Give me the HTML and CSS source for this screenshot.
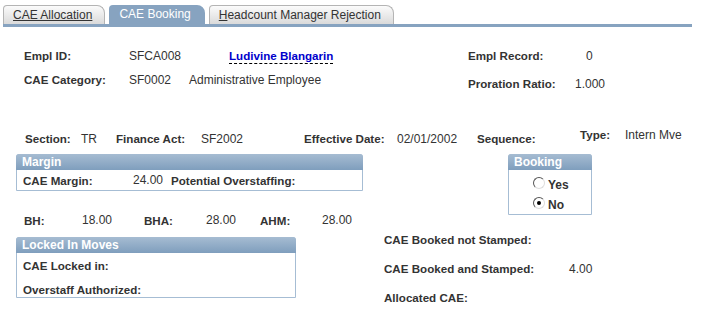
FILE: index.html
```html
<!DOCTYPE html>
<html lang="en">
<head>
  <meta charset="UTF-8">
  <title>CAE Booking</title>
  <link rel="stylesheet" href="styles.css">
</head>
<body>

<div class="tabs">
  <div class="tab"><span class="full-u">CAE Allocation</span></div>
  <div class="tab active">CAE Booking</div>
  <div class="tab"><u>H</u>eadcount Manager Rejection</div>
</div>

<div class="top">
  <div class="top-left">
    <div class="row">
      <span class="lbl w105">Empl ID:</span>
      <span class="val w100">SFCA008</span>
      <span class="name">Ludivine Blangarin</span>
    </div>
    <div class="row">
      <span class="lbl w105">CAE Category:</span>
      <span class="val w60">SF0002</span>
      <span class="val">Administrative Employee</span>
    </div>
  </div>
  <div class="top-right">
    <div class="row">
      <span class="lbl w118">Empl Record:</span>
      <span class="val">0</span>
    </div>
    <div class="row">
      <span class="lbl w107">Proration Ratio:</span>
      <span class="val">1.000</span>
    </div>
  </div>
</div>

<div class="info-row">
  <span class="lbl w56">Section:</span>
  <span class="val w35">TR</span>
  <span class="lbl w85">Finance Act:</span>
  <span class="val w103">SF2002</span>
  <span class="lbl w93">Effective Date:</span>
  <span class="val w80">02/01/2002</span>
  <span class="lbl w103">Sequence:</span>
  <span class="raised">
    <span class="lbl w45">Type:</span>
    <span class="val">Intern Mve</span>
  </span>
</div>

<div class="part-a">
  <div class="col-a">
    <div class="group margin-box">
      <div class="group-head">Margin</div>
      <div class="group-body margin-body">
        <span class="lbl w94">CAE Margin:</span>
        <span class="val num">24.00</span>
        <span class="lbl">Potential Overstaffing:</span>
      </div>
    </div>
    <div class="bh-row">
      <span class="lbl w58">BH:</span>
      <span class="val w62">18.00</span>
      <span class="lbl w62">BHA:</span>
      <span class="val w54">28.00</span>
      <span class="lbl w62">AHM:</span>
      <span class="val">28.00</span>
    </div>
  </div>
  <div class="group booking-box">
    <div class="group-head">Booking</div>
    <div class="group-body booking-body">
      <div class="radio-line"><span class="radio"></span><span class="opt">Yes</span></div>
      <div class="radio-line"><span class="radio checked"></span><span class="opt">No</span></div>
    </div>
  </div>
</div>

<div class="part-b">
  <div class="group locked-box">
    <div class="group-head">Locked In Moves</div>
    <div class="group-body locked-body">
      <div class="lbl">CAE Locked in:</div>
      <div class="lbl">Overstaff Authorized:</div>
    </div>
  </div>
  <div class="booked">
    <div class="row"><span class="lbl">CAE Booked not Stamped:</span></div>
    <div class="row"><span class="lbl w185">CAE Booked and Stamped:</span><span class="val">4.00</span></div>
    <div class="row"><span class="lbl">Allocated CAE:</span></div>
  </div>
</div>

</body>
</html>
```

FILE: styles.css
```css
body {
  margin: 0;
  font-family: "Liberation Sans", Arial, sans-serif;
  font-size: 12px;
  color: #333;
  background: white;
}
.tabs {
  display: flex;
  gap: 4px;
  margin: 5px 0 0 3px;
  width: 689px;
  height: 19px;
  border-bottom: 3px solid #87a3c0;
}
.tab {
  height: 18px;
  line-height: 19px;
  padding: 0 12px 0 9px;
  border: 1px solid #b4b4b4;
  border-bottom: none;
  border-radius: 4px 8px 0 0;
  background: linear-gradient(#fbfbfb, #dadada);
  color: #333;
  white-space: nowrap;
}
.tab.active {
  height: 19px;
  border: none;
  padding: 0 14px 0 10px;
  background: #87a3c0;
  color: white;
}
.full-u {
  text-decoration: underline;
}
.lbl {
  font-weight: bold;
  font-size: 11.6px;
  color: #333;
  white-space: nowrap;
}
.val {
  white-space: nowrap;
}
.row {
  display: flex;
  align-items: center;
  height: 16px;
  line-height: 16px;
}
.w35 { width: 35px; }
.w45 { width: 45px; }
.w54 { width: 54px; }
.w56 { width: 56px; }
.w58 { width: 58px; }
.w60 { width: 60px; }
.w62 { width: 62px; }
.w80 { width: 80px; }
.w85 { width: 85px; }
.w93 { width: 93px; }
.w94 { width: 94px; }
.w100 { width: 100px; }
.w103 { width: 103px; }
.w105 { width: 105px; }
.w107 { width: 107px; }
.w118 { width: 118px; }
.w185 { width: 185px; }
.name {
  color: #0000cc;
  font-weight: bold;
  font-size: 11.6px;
  border-bottom: 1px dashed #000;
  line-height: 14px;
}
.top {
  display: flex;
  margin-top: 21px;
  padding-left: 24px;
}
.top-left {
  width: 444px;
  display: flex;
  flex-direction: column;
  gap: 8px;
}
.top-right {
  display: flex;
  flex-direction: column;
  gap: 12px;
}
.info-row {
  display: flex;
  align-items: flex-end;
  margin-top: 35px;
  padding-left: 25px;
  line-height: 16px;
}
.raised {
  display: flex;
  padding-bottom: 4px;
}
.group {
  border: 1px solid #a6bdd4;
  border-radius: 3px 3px 0 0;
}
.group-head {
  height: 16px;
  line-height: 16px;
  padding-left: 6px;
  background: linear-gradient(#a6bcd2, #7f9ebd);
  color: white;
  font-weight: bold;
  margin: -1px -1px 0 -1px;
  border-radius: 3px 3px 0 0;
}
.part-a {
  display: flex;
  margin-top: 7px;
  padding-left: 16px;
}
.col-a {
  width: 492px;
}
.margin-box {
  width: 345px;
}
.margin-body {
  display: flex;
  align-items: center;
  height: 20px;
  padding-left: 6px;
}
.num {
  width: 46px;
  text-align: right;
  margin-right: 8px;
}
.bh-row {
  display: flex;
  align-items: center;
  height: 16px;
  margin-top: 21px;
  padding-left: 8px;
}
.booking-box {
  width: 82px;
  height: 59px;
}
.booking-body {
  padding: 5px 0 0 24px;
}
.radio-line {
  display: flex;
  align-items: center;
  height: 20px;
}
.radio {
  width: 10px;
  height: 10px;
  border-radius: 50%;
  border: 1px solid;
  border-color: #555 #ddd #ddd #555;
  background: white;
  margin-right: 3px;
  margin-top: -5px;
  position: relative;
}
.radio.checked::after {
  content: "";
  position: absolute;
  left: 3px;
  top: 3px;
  width: 4px;
  height: 4px;
  border-radius: 50%;
  background: #000;
}
.opt {
  font-weight: bold;
  font-size: 12px;
}
.part-b {
  display: flex;
  margin-top: 9px;
  padding-left: 16px;
}
.locked-box {
  width: 278px;
  height: 59px;
  margin-right: 88px;
}
.locked-body {
  padding: 5px 0 0 6px;
  display: flex;
  flex-direction: column;
  gap: 8px;
  line-height: 16px;
}
.booked {
  display: flex;
  flex-direction: column;
  gap: 13px;
  margin-top: -5px;
}
```
